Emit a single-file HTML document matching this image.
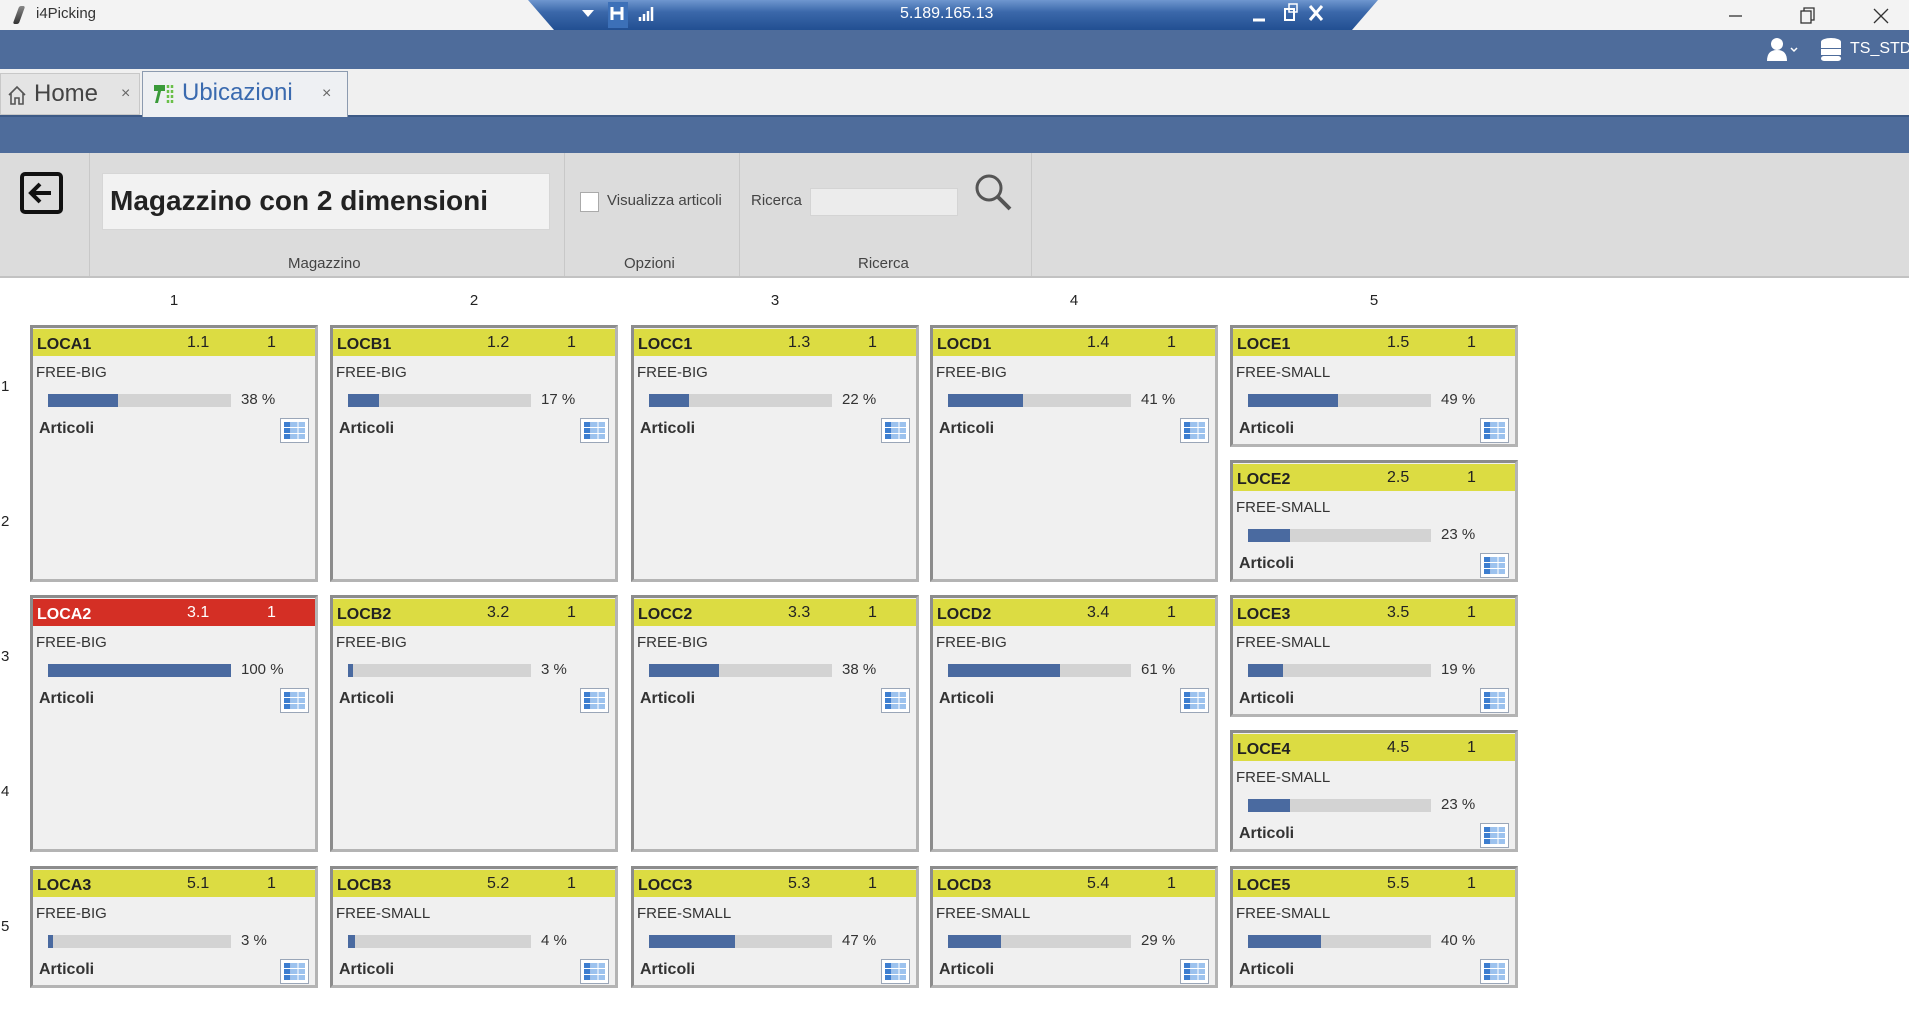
<!DOCTYPE html>
<html><head><meta charset="utf-8"><style>
*{margin:0;padding:0;box-sizing:border-box}
body{width:1909px;height:1031px;background:#fff;font-family:"Liberation Sans",Tahoma,sans-serif;position:relative;overflow:hidden;color:#222}
.a{position:absolute}
.card{position:absolute;width:288px;background:#f0f0f0;border:3px solid #b4b4b4;border-top-color:#8c8c8c;border-left-color:#8c8c8c}
.card.s{height:122px}.card.t{height:257px}
.hd{position:absolute;left:0;right:0;top:1px;height:27px;background:#dcdc42;font-size:16px}
.hd.r{background:#d42f25;color:#fff}
.hd b{position:absolute;left:4px;top:7px;font-weight:bold}
.hd .m{position:absolute;left:154px;top:5px}
.hd .n{position:absolute;left:234px;top:5px}
.ty{position:absolute;left:3px;top:36px;font-size:15px;color:#333}
.tr{position:absolute;left:15px;top:66px;width:183px;height:13px;background:#d3d3d3}
.fl{height:100%;background:#4a6aa0}
.pc{position:absolute;left:208px;top:63px;font-size:15px;color:#333}
.ar{position:absolute;left:6px;top:92px;font-size:16px;font-weight:bold;color:#333}
.ic{position:absolute;left:247px;top:90px;width:29px;height:25px;border:1px solid #9aa6b8;background:#fff;padding:3px}
.ic div{width:100%;height:100%;background:linear-gradient(#fff 0 0) 0 33%/100% 1px no-repeat,linear-gradient(#fff 0 0) 0 66%/100% 1px no-repeat,linear-gradient(90deg,#3d7ed0 30%,#fff 30% 34%,#9cc2ee 34% 64%,#fff 64% 68%,#9cc2ee 68%)}
.cl{position:absolute;top:292px;font-size:15px;width:20px;text-align:center}
.rl{position:absolute;left:1px;font-size:15px}
</style></head><body>
<div class="a" style="left:0;top:0;width:1909px;height:30px;background:#f3f3f3"></div>
<div class="a" style="left:16px;top:6px;width:6px;height:18px;background:linear-gradient(#888,#333);transform:skewX(-20deg);border-radius:2px"></div>
<div class="a" style="left:36px;top:5px;font-size:15px;color:#333">i4Picking</div>
<svg class="a" style="left:528px;top:0" width="850" height="31"><defs><linearGradient id="g" x1="0" y1="0" x2="0" y2="1"><stop offset="0" stop-color="#6f97cf"/><stop offset=".4" stop-color="#3b68aa"/><stop offset="1" stop-color="#224f92"/></linearGradient></defs><polygon points="0,0 850,0 824,30 26,30" fill="url(#g)"/><polygon points="54,10 66,10 60,17" fill="#fff"/><rect x="80" y="2" width="20" height="26" fill="#3c70b8"/><path d="M84 7v13M94 7v13M84 13h10" stroke="#fff" stroke-width="3"/><path d="M112 21v-4M116 21v-7M120 21v-10M124 21v-14" stroke="#fff" stroke-width="2.5"/><path d="M725 20h12" stroke="#fff" stroke-width="3"/><rect x="757" y="9" width="9" height="11" fill="none" stroke="#fff" stroke-width="2"/><rect x="761" y="4" width="8" height="8" fill="none" stroke="#fff" stroke-width="1.5"/><path d="M782 6l12 14M794 6l-12 14" stroke="#fff" stroke-width="3"/></svg>
<div class="a" style="left:900px;top:5px;font-size:16px;color:#fff">5.189.165.13</div>
<svg class="a" style="left:1725px;top:5px" width="180" height="22" stroke="#333" fill="none" stroke-width="1.3"><path d="M4 11h13"/><rect x="76" y="6" width="10" height="12"/><path d="M79 6V3h10v12h-3"/><path d="M149 4l14 14M163 4l-14 14"/></svg>
<div class="a" style="left:0;top:30px;width:1909px;height:39px;background:#4e6c9b"></div>
<svg class="a" style="left:1762px;top:36px" width="90" height="28" fill="#fff"><circle cx="15" cy="8" r="6"/><path d="M5 25q0-11 10-11t10 11z"/><path d="M29 12l3 3 3-3" stroke="#fff" fill="none" stroke-width="1.5"/><ellipse cx="69" cy="6" rx="10" ry="4"/><rect x="59" y="6" width="20" height="6"/><rect x="59" y="13" width="20" height="6"/><rect x="59" y="20" width="20" height="5" rx="3"/></svg>
<div class="a" style="left:1850px;top:40px;font-size:16px;color:#fff">TS_STD</div>
<div class="a" style="left:0;top:69px;width:1909px;height:48px;background:#f0f0f0;border-bottom:2px solid #3d5a86"></div>
<div class="a" style="left:0;top:73px;width:140px;height:42px;background:#e4e4e4;border:1px solid #c8c8c8"></div>
<svg class="a" style="left:7px;top:84px" width="20" height="22" fill="none" stroke="#555" stroke-width="1.6"><path d="M2 11L10 3l8 8M4 9v11h4v-6h4v6h4V9"/></svg>
<div class="a" style="left:34px;top:80px;font-size:24px;color:#444">Home</div>
<div class="a" style="left:121px;top:85px;font-size:16px;color:#666">×</div>
<div class="a" style="left:142px;top:71px;width:206px;height:46px;background:#eef0f3;border:1px solid #8c9bb0;border-bottom:none"></div>
<svg class="a" style="left:152px;top:82px" width="26" height="24"><path d="M2 3h11v6h-4l-3 12H3l3-12H2z" fill="#3a9a3a"/><path d="M16 3v3M16 8v3M16 13v3M16 18v3M20 3v3M20 8v3M20 13v3M20 18v3" stroke="#6ac04a" stroke-width="2.5"/></svg>
<div class="a" style="left:182px;top:79px;font-size:24px;color:#3a6aaf">Ubicazioni</div>
<div class="a" style="left:322px;top:85px;font-size:16px;color:#666">×</div>
<div class="a" style="left:0;top:117px;width:1909px;height:36px;background:#4e6c9b"></div>
<div class="a" style="left:0;top:153px;width:1909px;height:125px;background:#dcdcdc;border-bottom:2px solid #c2c2c2"></div>
<div class="a" style="left:89px;top:153px;width:1px;height:123px;background:#c8c8c8"></div>
<div class="a" style="left:564px;top:153px;width:1px;height:123px;background:#c8c8c8"></div>
<div class="a" style="left:739px;top:153px;width:1px;height:123px;background:#c8c8c8"></div>
<div class="a" style="left:1031px;top:153px;width:1px;height:123px;background:#c8c8c8"></div>
<svg class="a" style="left:20px;top:172px" width="44" height="42"><rect x="2" y="2" width="39" height="38" rx="3" fill="none" stroke="#111" stroke-width="4"/><path d="M31 21H12M20 12l-9 9 9 9" fill="none" stroke="#111" stroke-width="4"/></svg>
<div class="a" style="left:102px;top:173px;width:448px;height:57px;background:#f2f2f2;border:1px solid #d6d6d6"></div>
<div class="a" style="left:110px;top:185px;font-size:28px;font-weight:bold;color:#222">Magazzino con 2 dimensioni</div>
<div class="a" style="left:580px;top:192px;width:19px;height:20px;background:#fff;border:1px solid #aaa"></div>
<div class="a" style="left:607px;top:192px;font-size:15px;color:#444">Visualizza articoli</div>
<div class="a" style="left:751px;top:192px;font-size:15px;color:#444">Ricerca</div>
<div class="a" style="left:810px;top:188px;width:148px;height:28px;background:#ececec;border:1px solid #d4d4d4"></div>
<svg class="a" style="left:973px;top:172px" width="42" height="42" fill="none" stroke="#555" stroke-width="3"><circle cx="16" cy="16" r="12"/><path d="M25 25l12 12" stroke-width="4"/></svg>
<div class="a" style="left:288px;top:255px;font-size:15px;color:#444">Magazzino</div>
<div class="a" style="left:624px;top:255px;font-size:15px;color:#444">Opzioni</div>
<div class="a" style="left:858px;top:255px;font-size:15px;color:#444">Ricerca</div>
<div class="cl" style="left:164px">1</div><div class="cl" style="left:464px">2</div><div class="cl" style="left:765px">3</div><div class="cl" style="left:1064px">4</div><div class="cl" style="left:1364px">5</div>
<div class="rl" style="top:378px">1</div><div class="rl" style="top:513px">2</div><div class="rl" style="top:648px">3</div><div class="rl" style="top:783px">4</div><div class="rl" style="top:918px">5</div>

<div class="card t" style="left:30px;top:325px"><div class="hd"><b>LOCA1</b><span class="m">1.1</span><span class="n">1</span></div><div class="ty">FREE-BIG</div><div class="tr"><div class="fl" style="width:38%"></div></div><div class="pc">38 %</div><div class="ar">Articoli</div><div class="ic"><div></div></div></div>
<div class="card t" style="left:330px;top:325px"><div class="hd"><b>LOCB1</b><span class="m">1.2</span><span class="n">1</span></div><div class="ty">FREE-BIG</div><div class="tr"><div class="fl" style="width:17%"></div></div><div class="pc">17 %</div><div class="ar">Articoli</div><div class="ic"><div></div></div></div>
<div class="card t" style="left:631px;top:325px"><div class="hd"><b>LOCC1</b><span class="m">1.3</span><span class="n">1</span></div><div class="ty">FREE-BIG</div><div class="tr"><div class="fl" style="width:22%"></div></div><div class="pc">22 %</div><div class="ar">Articoli</div><div class="ic"><div></div></div></div>
<div class="card t" style="left:930px;top:325px"><div class="hd"><b>LOCD1</b><span class="m">1.4</span><span class="n">1</span></div><div class="ty">FREE-BIG</div><div class="tr"><div class="fl" style="width:41%"></div></div><div class="pc">41 %</div><div class="ar">Articoli</div><div class="ic"><div></div></div></div>
<div class="card s" style="left:1230px;top:325px"><div class="hd"><b>LOCE1</b><span class="m">1.5</span><span class="n">1</span></div><div class="ty">FREE-SMALL</div><div class="tr"><div class="fl" style="width:49%"></div></div><div class="pc">49 %</div><div class="ar">Articoli</div><div class="ic"><div></div></div></div>
<div class="card s" style="left:1230px;top:460px"><div class="hd"><b>LOCE2</b><span class="m">2.5</span><span class="n">1</span></div><div class="ty">FREE-SMALL</div><div class="tr"><div class="fl" style="width:23%"></div></div><div class="pc">23 %</div><div class="ar">Articoli</div><div class="ic"><div></div></div></div>

<div class="card t" style="left:30px;top:595px"><div class="hd r"><b>LOCA2</b><span class="m">3.1</span><span class="n">1</span></div><div class="ty">FREE-BIG</div><div class="tr"><div class="fl" style="width:100%"></div></div><div class="pc">100 %</div><div class="ar">Articoli</div><div class="ic"><div></div></div></div>
<div class="card t" style="left:330px;top:595px"><div class="hd"><b>LOCB2</b><span class="m">3.2</span><span class="n">1</span></div><div class="ty">FREE-BIG</div><div class="tr"><div class="fl" style="width:3%"></div></div><div class="pc">3 %</div><div class="ar">Articoli</div><div class="ic"><div></div></div></div>
<div class="card t" style="left:631px;top:595px"><div class="hd"><b>LOCC2</b><span class="m">3.3</span><span class="n">1</span></div><div class="ty">FREE-BIG</div><div class="tr"><div class="fl" style="width:38%"></div></div><div class="pc">38 %</div><div class="ar">Articoli</div><div class="ic"><div></div></div></div>
<div class="card t" style="left:930px;top:595px"><div class="hd"><b>LOCD2</b><span class="m">3.4</span><span class="n">1</span></div><div class="ty">FREE-BIG</div><div class="tr"><div class="fl" style="width:61%"></div></div><div class="pc">61 %</div><div class="ar">Articoli</div><div class="ic"><div></div></div></div>
<div class="card s" style="left:1230px;top:595px"><div class="hd"><b>LOCE3</b><span class="m">3.5</span><span class="n">1</span></div><div class="ty">FREE-SMALL</div><div class="tr"><div class="fl" style="width:19%"></div></div><div class="pc">19 %</div><div class="ar">Articoli</div><div class="ic"><div></div></div></div>
<div class="card s" style="left:1230px;top:730px"><div class="hd"><b>LOCE4</b><span class="m">4.5</span><span class="n">1</span></div><div class="ty">FREE-SMALL</div><div class="tr"><div class="fl" style="width:23%"></div></div><div class="pc">23 %</div><div class="ar">Articoli</div><div class="ic"><div></div></div></div>

<div class="card s" style="left:30px;top:866px"><div class="hd"><b>LOCA3</b><span class="m">5.1</span><span class="n">1</span></div><div class="ty">FREE-BIG</div><div class="tr"><div class="fl" style="width:3%"></div></div><div class="pc">3 %</div><div class="ar">Articoli</div><div class="ic"><div></div></div></div>
<div class="card s" style="left:330px;top:866px"><div class="hd"><b>LOCB3</b><span class="m">5.2</span><span class="n">1</span></div><div class="ty">FREE-SMALL</div><div class="tr"><div class="fl" style="width:4%"></div></div><div class="pc">4 %</div><div class="ar">Articoli</div><div class="ic"><div></div></div></div>
<div class="card s" style="left:631px;top:866px"><div class="hd"><b>LOCC3</b><span class="m">5.3</span><span class="n">1</span></div><div class="ty">FREE-SMALL</div><div class="tr"><div class="fl" style="width:47%"></div></div><div class="pc">47 %</div><div class="ar">Articoli</div><div class="ic"><div></div></div></div>
<div class="card s" style="left:930px;top:866px"><div class="hd"><b>LOCD3</b><span class="m">5.4</span><span class="n">1</span></div><div class="ty">FREE-SMALL</div><div class="tr"><div class="fl" style="width:29%"></div></div><div class="pc">29 %</div><div class="ar">Articoli</div><div class="ic"><div></div></div></div>
<div class="card s" style="left:1230px;top:866px"><div class="hd"><b>LOCE5</b><span class="m">5.5</span><span class="n">1</span></div><div class="ty">FREE-SMALL</div><div class="tr"><div class="fl" style="width:40%"></div></div><div class="pc">40 %</div><div class="ar">Articoli</div><div class="ic"><div></div></div></div>
</body></html>
